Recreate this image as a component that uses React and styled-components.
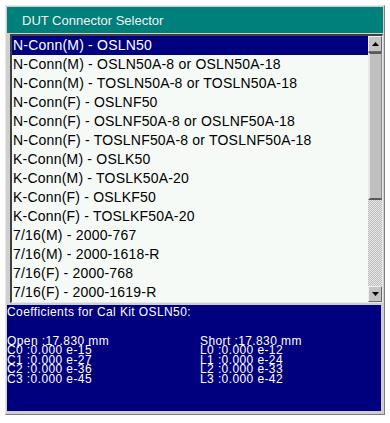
import React from "react";
import styled, { createGlobalStyle } from "styled-components";

const GlobalStyle = createGlobalStyle`
  body {
    margin: 0;
    background: #ffffff;
    font-family: "Liberation Sans", Arial, sans-serif;
  }
`;

const Window = styled.div`
  margin: 5px 0 0 5px;
  width: 380px;
  box-sizing: border-box;
  background: #cfcfcf;
  border: 1px solid;
  border-color: #e4e4e4 #7c7c7c #7c7c7c #e4e4e4;
  padding: 1px 1px 3px 1px;
`;

const TitleBar = styled.div`
  height: 26px;
  background: #00807a;
  color: #f2f2f2;
  font-size: 13px;
  display: flex;
  align-items: center;
  padding-left: 15px;
`;

const ListFrame = styled.div`
  display: flex;
  margin: 1px 0 1px 3px;
  border-style: solid;
  border-width: 2px 1px 1px 2px;
  border-color: #404040 #e8e8e8 #e8e8e8 #404040;
  background: #f5faf7;
`;

const Rows = styled.ul`
  flex: 1;
  list-style: none;
  margin: 0;
  padding: 0;
`;

const Row = styled.li`
  height: 19px;
  line-height: 19px;
  padding-left: 1px;
  font-size: 14px;
  letter-spacing: 0.2px;
  white-space: nowrap;
  color: ${p => (p.selected ? "#ffffff" : "#000000")};
  background: ${p => (p.selected ? "#000080" : "transparent")};
`;

const Scrollbar = styled.div`
  width: 14px;
  display: flex;
  flex-direction: column;
`;

const ArrowButton = styled.div`
  height: 16px;
  box-sizing: border-box;
  background: #c4c4c4;
  border-style: solid;
  border-width: 1px;
  border-color: #f0f0f0 #6a6a6a #6a6a6a #f0f0f0;
  display: flex;
  align-items: center;
  justify-content: center;
`;

const Thumb = styled.div`
  height: 148px;
  box-sizing: border-box;
  background: #c0c0c0;
  border-style: solid;
  border-width: 2px 1px 2px 2px;
  border-color: #5a5a5a #8a8a8a #5a5a5a #e8e8e8;
`;

const Trough = styled.div`
  flex: 1;
  background: repeating-conic-gradient(#bcbcbc 0 25%, #e8e8e8 0 50%) 0 0 / 2px 2px;
`;

const CoeffPanel = styled.div`
  margin-top: 2px;
  margin-right: 2px;
  height: 106px;
  box-sizing: border-box;
  background: #00007f;
  color: #ffffff;
  font-size: 12px;
  letter-spacing: 0.4px;
  line-height: 9.5px;
  padding-top: 3px;
`;

const CoeffHeading = styled.div`
  margin-bottom: 19px;
`;

const CoeffColumns = styled.div`
  display: grid;
  grid-template-columns: 193px 1fr;
`;

const CoeffLine = styled.div`
  white-space: nowrap;
`;

const Arrow = ({ up }) => (
  <svg width="7" height="4" viewBox="0 0 7 4">
    <polygon points={up ? "3.5,0 7,4 0,4" : "0,0 7,0 3.5,4"} fill="#000" />
  </svg>
);

const connectors = [
  "N-Conn(M) - OSLN50",
  "N-Conn(M) - OSLN50A-8 or OSLN50A-18",
  "N-Conn(M) - TOSLN50A-8 or TOSLN50A-18",
  "N-Conn(F) - OSLNF50",
  "N-Conn(F) - OSLNF50A-8 or OSLNF50A-18",
  "N-Conn(F) - TOSLNF50A-8 or TOSLNF50A-18",
  "K-Conn(M) - OSLK50",
  "K-Conn(M) - TOSLK50A-20",
  "K-Conn(F) - OSLKF50",
  "K-Conn(F) - TOSLKF50A-20",
  "7/16(M) - 2000-767",
  "7/16(M) - 2000-1618-R",
  "7/16(F) - 2000-768",
  "7/16(F) - 2000-1619-R"
];

const openCoeffs = [
  "Open :17.830 mm",
  "C0 :0.000 e-15",
  "C1 :0.000 e-27",
  "C2 :0.000 e-36",
  "C3 :0.000 e-45"
];

const shortCoeffs = [
  "Short :17.830 mm",
  "L0 :0.000 e-12",
  "L1 :0.000 e-24",
  "L2 :0.000 e-33",
  "L3 :0.000 e-42"
];

export default function App() {
  return (
    <>
      <GlobalStyle />
      <Window>
        <TitleBar>DUT Connector Selector</TitleBar>
        <ListFrame>
          <Rows>
            {connectors.map((c, i) => (
              <Row key={c} selected={i === 0}>
                {c}
              </Row>
            ))}
          </Rows>
          <Scrollbar>
            <ArrowButton>
              <Arrow up />
            </ArrowButton>
            <Thumb />
            <Trough />
            <ArrowButton>
              <Arrow />
            </ArrowButton>
          </Scrollbar>
        </ListFrame>
        <CoeffPanel>
          <CoeffHeading>Coefficients for Cal Kit OSLN50:</CoeffHeading>
          <CoeffColumns>
            <div>
              {openCoeffs.map(l => (
                <CoeffLine key={l}>{l}</CoeffLine>
              ))}
            </div>
            <div>
              {shortCoeffs.map(l => (
                <CoeffLine key={l}>{l}</CoeffLine>
              ))}
            </div>
          </CoeffColumns>
        </CoeffPanel>
      </Window>
    </>
  );
}
